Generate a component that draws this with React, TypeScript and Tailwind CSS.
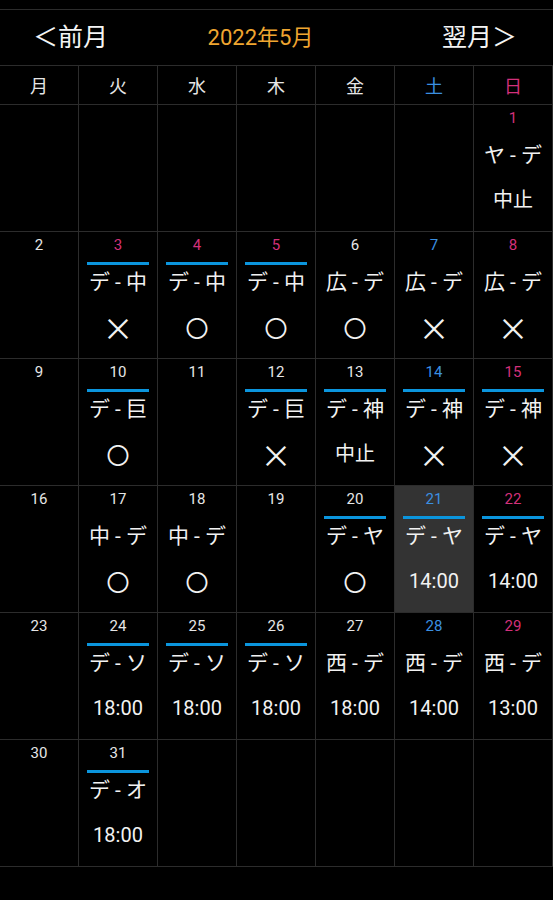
import React from 'react';

type Day = {
  date?: number;
  tone?: 'sat' | 'sun';
  home?: boolean;
  game?: string;
  result?: string;
  selected?: boolean;
};

// 5月の日程 (月曜始まり)
const weeks: Day[][] = [
  [{}, {}, {}, {}, {}, {}, { date: 1, tone: 'sun', game: 'ヤ - デ', result: '中止' }],
  [
    { date: 2 },
    { date: 3, tone: 'sun', home: true, game: 'デ - 中', result: '×' },
    { date: 4, tone: 'sun', home: true, game: 'デ - 中', result: '〇' },
    { date: 5, tone: 'sun', home: true, game: 'デ - 中', result: '〇' },
    { date: 6, game: '広 - デ', result: '〇' },
    { date: 7, tone: 'sat', game: '広 - デ', result: '×' },
    { date: 8, tone: 'sun', game: '広 - デ', result: '×' },
  ],
  [
    { date: 9 },
    { date: 10, home: true, game: 'デ - 巨', result: '〇' },
    { date: 11 },
    { date: 12, home: true, game: 'デ - 巨', result: '×' },
    { date: 13, home: true, game: 'デ - 神', result: '中止' },
    { date: 14, tone: 'sat', home: true, game: 'デ - 神', result: '×' },
    { date: 15, tone: 'sun', home: true, game: 'デ - 神', result: '×' },
  ],
  [
    { date: 16 },
    { date: 17, game: '中 - デ', result: '〇' },
    { date: 18, game: '中 - デ', result: '〇' },
    { date: 19 },
    { date: 20, home: true, game: 'デ - ヤ', result: '〇' },
    { date: 21, tone: 'sat', home: true, game: 'デ - ヤ', result: '14:00', selected: true },
    { date: 22, tone: 'sun', home: true, game: 'デ - ヤ', result: '14:00' },
  ],
  [
    { date: 23 },
    { date: 24, home: true, game: 'デ - ソ', result: '18:00' },
    { date: 25, home: true, game: 'デ - ソ', result: '18:00' },
    { date: 26, home: true, game: 'デ - ソ', result: '18:00' },
    { date: 27, game: '西 - デ', result: '18:00' },
    { date: 28, tone: 'sat', game: '西 - デ', result: '14:00' },
    { date: 29, tone: 'sun', game: '西 - デ', result: '13:00' },
  ],
  [{ date: 30 }, { date: 31, home: true, game: 'デ - オ', result: '18:00' }, {}, {}, {}, {}, {}],
];

const weekdays = ['月', '火', '水', '木', '金', '土', '日'];

const toneClass = (tone?: 'sat' | 'sun') =>
  tone === 'sat' ? 'text-[#3b8fe0]' : tone === 'sun' ? 'text-[#d3307a]' : 'text-[#e6e6e6]';

const resultClass = (result: string) => {
  if (result === '×') return 'text-[31px]';
  if (result === '〇') return 'text-[23px]';
  return 'text-[20px]';
};

const Cell: React.FC<{ day: Day }> = ({ day }) => {
  const isMark = day.result === '〇' || day.result === '×';
  return (
    <div
      className={`h-[127px] border-r border-b border-[#2c2c2c] flex flex-col items-center ${
        day.selected ? 'bg-[#333333]' : ''
      }`}
    >
      {day.date !== undefined && (
        <>
          <div className={`h-[27px] leading-[27px] text-[15px] ${toneClass(day.tone)}`}>{day.date}</div>
          <div className={`mt-[3px] h-[3px] w-[62px] ${day.home ? 'bg-[#0b95dd]' : ''}`} />
          {day.game && (
            <div className="h-[34px] leading-[34px] text-[21px] text-[#f2f2f2] whitespace-nowrap">{day.game}</div>
          )}
          {day.result && (
            <div
              className={`h-[56px] leading-[56px] text-[#f2f2f2] ${resultClass(day.result)}`}
              style={isMark ? { fontFamily: '"Noto Sans CJK JP", sans-serif' } : undefined}
            >
              {day.result}
            </div>
          )}
        </>
      )}
    </div>
  );
};

export default function App() {
  return (
    <div
      className="w-[553px] h-[900px] bg-black pt-[9px] overflow-hidden"
      style={{ fontFamily: 'Roboto, "Noto Sans CJK JP", sans-serif' }}
    >
      <div className="border-t border-b border-[#2c2c2c] h-[57px] flex items-center justify-between pl-[33px] pr-[36px]">
        <span className="text-[25px] text-[#f4f4f4]">＜前月</span>
        <span className="text-[22px] text-[#f0a630] pr-[29px]">2022年5月</span>
        <span className="text-[25px] text-[#f4f4f4]">翌月＞</span>
      </div>

      <div className="grid grid-cols-7">
        {weekdays.map((w, i) => (
          <div
            key={w}
            className={`h-[39px] border-r border-b border-[#2c2c2c] flex items-center justify-center pt-[3px] text-[18px] ${toneClass(
              i === 5 ? 'sat' : i === 6 ? 'sun' : undefined
            )}`}
          >
            {w}
          </div>
        ))}
      </div>

      <div className="grid grid-cols-7">
        {weeks.map((week, wi) => week.map((day, di) => <Cell key={`${wi}-${di}`} day={day} />))}
      </div>
    </div>
  );
}
